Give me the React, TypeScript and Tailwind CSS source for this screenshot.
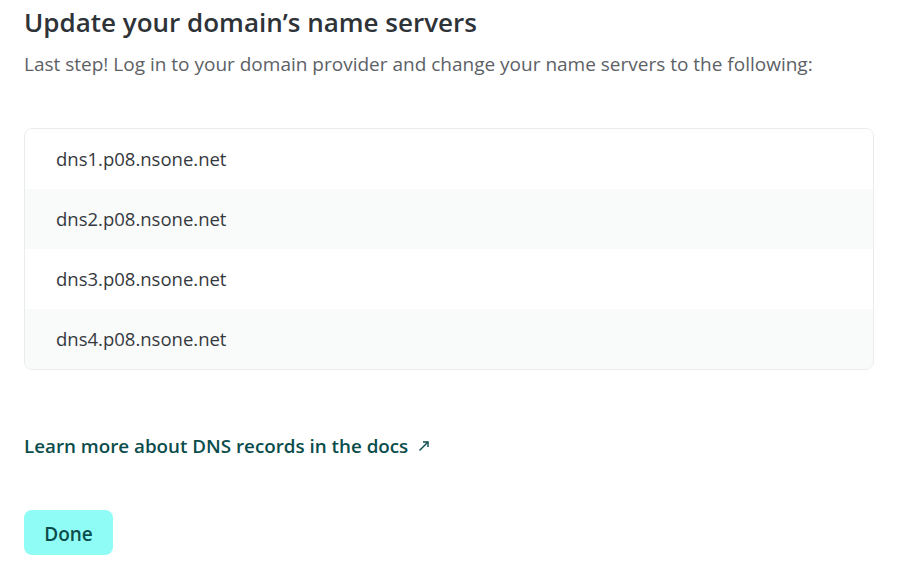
import React from "react";

const servers = [
  "dns1.p08.nsone.net",
  "dns2.p08.nsone.net",
  "dns3.p08.nsone.net",
  "dns4.p08.nsone.net",
];

export default function App() {
  return (
    <div
      className="w-[907px] h-[580px] bg-white px-6 pt-[4px]"
      style={{ fontFamily: '"Segoe UI", "Open Sans", "Noto Sans", sans-serif' }}
    >
      <h1 className="text-[26px] leading-[36px] font-semibold text-[#2e3338]">
        Update your domain’s name servers
      </h1>
      <p className="mt-[10px] text-[19px] leading-[28px] text-[#5d6166]">
        Last step! Log in to your domain provider and change your name servers to the following:
      </p>
      <div className="mt-[50px] w-[850px] rounded-[8px] border border-[#e9ebed] overflow-hidden">
        {servers.map((s, i) => (
          <div
            key={s}
            className={`h-[60px] flex items-center pl-[31px] text-[18.5px] text-[#35393e] ${
              i % 2 === 1 ? "bg-[#f9fafa]" : "bg-white"
            }`}
          >
            {s}
          </div>
        ))}
      </div>
      <div className="mt-[63px] h-[26px] flex items-center">
        <a
          href="#"
          className="inline-flex items-center gap-[10px] text-[18.8px] font-semibold text-[#0b4d4c]"
        >
          Learn more about DNS records in the docs
          <svg width="12" height="12" viewBox="0 0 12 12" fill="none" stroke="#0b4d4c" strokeWidth="1.4">
            <path d="M1.5 10.5 L10 2" />
            <path d="M5 2 H10 V7" />
          </svg>
        </a>
      </div>
      <div className="mt-[51px]">
        <button className="w-[89px] h-[45px] pt-[4px] rounded-[8px] bg-[#90fcf6] text-[19px] font-semibold text-[#0b4d4c]">
          Done
        </button>
      </div>
    </div>
  );
}
